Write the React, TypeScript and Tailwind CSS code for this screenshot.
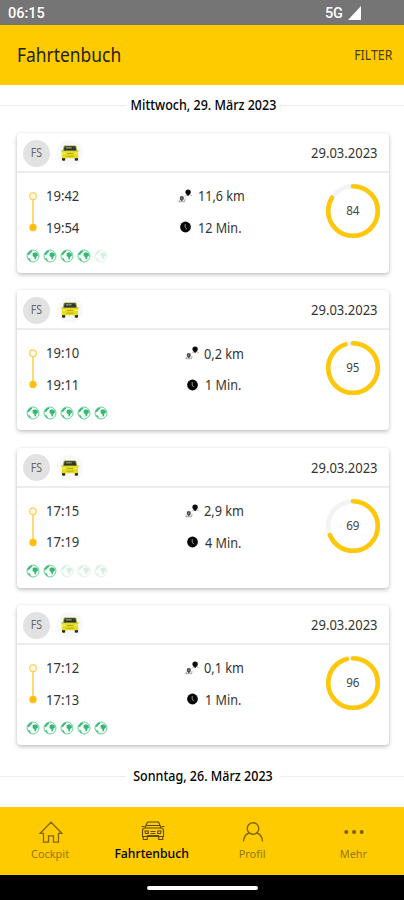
import React from 'react';

type Trip = {
  start: string;
  end: string;
  km: string;
  min: string;
  score: number;
  eco: number;
  wide?: boolean;
};

const trips: Trip[] = [
  { start: '19:42', end: '19:54', km: '11,6 km', min: '12 Min.', score: 84, eco: 4, wide: true },
  { start: '19:10', end: '19:11', km: '0,2 km', min: '1 Min.', score: 95, eco: 5 },
  { start: '17:15', end: '17:19', km: '2,9 km', min: '4 Min.', score: 69, eco: 2 },
  { start: '17:12', end: '17:13', km: '0,1 km', min: '1 Min.', score: 96, eco: 5 },
];

function TaxiIcon() {
  return (
    <svg width="18" height="16" viewBox="0 0 18 16">
      <path d="M.9 12h3.300v3.200c0 .6-3.100.6-3.100 0zM13.800 12h3.300l-.2 3.200c0 .6-3.100.6-3.100 0z" fill="#25251c" />
      <path d="M3.500.6h11q.7 0 .9.900l1.200 5.500H1.400l1.200-5.500q.2-.9.900-.9z" fill="#aaa83c" />
      <path d="M3.700 1.300h10.600l1 4.500H2.700z" fill="#2b3630" />
      <path d="M5 2h5.500l.5 1.500H4.700z" fill="#7c8580" />
      <path d="M1.800 5.700h14.400l.9 2v4.800q0 .7-.8.700H1.700q-.8 0-.8-.7V7.700z" fill="#e5dc20" />
      <path d="M.2 5.400h1.900v1.200H.2zM15.900 5.400h1.900v1.200h-1.900z" fill="#c8c123" />
      <path d="M6 8h6v.7H6zM5.500 10.700h7v.8h-7z" fill="#a59a12" />
      <path d="M1.600 7.800h2.700V9H1.600zM13.700 7.800h2.700V9h-2.700z" fill="#fff56b" />
    </svg>
  );
}

function Globe({ on }: { on: boolean }) {
  return (
    <svg width="14" height="14" viewBox="0 0 14 14" className={on ? '' : 'opacity-20'}>
      <circle cx="7" cy="7" r="6" fill="#f5fdf8" stroke="#5cc890" strokeWidth="0.900" />
      <path
        d="M1.200 5.400 3.400 2.500 5.800 1.500 6.300 2.500 4.500 3.900 3.500 5.600 2.300 6zM6.600 4.300 9 3.200 11.600 4.300 12 6.800 10.500 7.600 9.900 10.300 8.700 10.400 8.300 8 6.700 7.200zM1.800 9 3.500 9.300 5.200 12.300 3.600 11.600z"
        fill="#35b873"
      />
    </svg>
  );
}

function RouteIcon() {
  return (
    <svg width="15" height="14" viewBox="0 0 15 14">
      <path d="M7.400 3.300a2.700 2.700 0 1 1 5.400 0C12.800 5 10.100 7.200 10.100 7.200S7.400 5 7.400 3.300z" fill="#0c0c0c" />
      <path d="M1.700 9.200a2.100 2.100 0 1 1 4.200 0c0 1.300-2.100 3.100-2.100 3.100S1.700 10.500 1.700 9.200z" fill="#444" />
      <circle cx="3.800" cy="9.200" r="0.600" fill="#ccc" />
      <path d="M1.500 10.800.8 12.700h5.700l.6-2.700M7 7.500 8.500 6M12.200 6l1.600.8" fill="none" stroke="#8a8a8a" strokeWidth="0.800" />
    </svg>
  );
}

function ClockIcon() {
  return (
    <svg width="11" height="12" viewBox="0 0 11 12">
      <circle cx="5.500" cy="6" r="5.400" fill="#080808" />
      <path d="M5.200 3.200v3l1.600 1.900" fill="none" stroke="#aaa" strokeWidth="0.900" />
    </svg>
  );
}

function ScoreRing({ score }: { score: number }) {
  return (
    <div className="grid h-[56px] w-[56px] place-items-center">
      <svg width="56" height="56" viewBox="0 0 56 56" className="col-start-1 row-start-1">
        <circle cx="28" cy="28" r="24.800" fill="none" stroke="#f3f3f3" strokeWidth="4.600" />
        <circle
          cx="28"
          cy="28"
          r="24.800"
          fill="none"
          stroke="#fec708"
          strokeWidth="4.600"
          strokeLinecap="round"
          pathLength={100}
          strokeDasharray={`${score} 100`}
          transform="rotate(-90 28 28)"
        />
      </svg>
      <span className="col-start-1 row-start-1 scale-x-[0.97] text-[12px] leading-none text-[#444]">{score}</span>
    </div>
  );
}

function TripCard({ trip }: { trip: Trip }) {
  return (
    <article className="h-[140px] rounded-[4px] bg-white shadow-[0_2px_4px_rgba(0,0,0,0.22),0_0_3px_rgba(0,0,0,0.07)]">
      <header className="flex h-[40px] items-center border-b-2 border-[#ededed] pt-[2px] pr-[11px] pl-[6px]">
        <span className="flex h-[27px] w-[27px] items-center justify-center rounded-full bg-[#e2e2e2] text-[12px] text-[#666]">
          <span className="scale-x-[0.88]">FS</span>
        </span>
        <span className="ml-[7px] flex h-[26px] w-[26px] items-center justify-center rounded-full bg-[#f8f8f8]">
          <TaxiIcon />
        </span>
        <span className="ml-auto origin-right scale-x-[0.93] text-[14px] leading-none text-[#333]">29.03.2023</span>
      </header>
      <div className="flex h-[100px]">
        <div className="w-[160px] pl-[9px]">
          <div className="flex pt-[7px]">
            <svg width="14" height="56" viewBox="0 0 14 56">
              <path d="M7 19.500V45" stroke="#fed45c" strokeWidth="1.700" />
              <circle cx="7" cy="16.200" r="3.300" fill="#fffaf0" stroke="#fed04c" strokeWidth="1.200" />
              <circle cx="7" cy="47.500" r="3.700" fill="#febf0e" />
            </svg>
            <div className="ml-[6px] flex origin-left scale-x-[0.93] flex-col text-[14px] leading-[31.500px] text-[#333]">
              <span>{trip.start}</span>
              <span>{trip.end}</span>
            </div>
          </div>
          <div className="mt-[6px] flex gap-[3px]">
            {[0, 1, 2, 3, 4].map((i) => (
              <Globe key={i} on={i < trip.eco} />
            ))}
          </div>
        </div>
        <div className={trip.wide ? 'pt-[7px] pl-[1px]' : 'pt-[7px] pl-[8px]'}>
          <div className="flex h-[31.500px] items-center">
            <RouteIcon />
            <span className={trip.wide ? 'ml-[5px] origin-left scale-x-[0.9] text-[14px] text-[#333]' : 'ml-[4px] origin-left scale-x-[0.91] text-[14px] text-[#333]'}>
              {trip.km}
            </span>
          </div>
          <div className="flex h-[31.500px] items-center">
            <span className="ml-[2px] w-[18px]">
              <ClockIcon />
            </span>
            <span className="origin-left scale-x-[0.9] text-[14px] text-[#333]">{trip.min}</span>
          </div>
        </div>
        <div className="mt-[10px] mr-[8px] ml-auto">
          <ScoreRing score={trip.score} />
        </div>
      </div>
    </article>
  );
}

function DateRule({ children }: { children: React.ReactNode }) {
  return (
    <div className="flex h-[20px] items-center">
      <span className="h-px w-[126px] bg-[#ededed]" />
      <span className="flex w-[154px] justify-center text-[14px] leading-none font-medium whitespace-nowrap text-black">
        <span className="scale-x-[0.895]">{children}</span>
      </span>
      <span className="h-px flex-1 bg-[#ededed]" />
    </div>
  );
}

function NavItem({ icon, label, active }: { icon: React.ReactNode; label: string; active?: boolean }) {
  return (
    <div className={active ? 'flex flex-1 flex-col items-center text-black' : 'flex flex-1 flex-col items-center text-[#947813]'}>
      <div className="mt-[12px] flex h-[24px] items-center">{icon}</div>
      <span className={active ? 'mt-[2px] scale-x-[0.94] text-[13px] leading-[16px] font-medium' : 'mt-[2px] scale-x-[0.95] text-[11.500px] leading-[18px]'}>
        {label}
      </span>
    </div>
  );
}

export default function App() {
  return (
    <main className="flex h-[900px] w-[404px] flex-col overflow-hidden bg-white font-['Noto_Sans',sans-serif]">
      <div className="flex h-[25px] shrink-0 items-center bg-[#757575] pr-[43px] pl-[8px] font-['Roboto',sans-serif] font-medium text-white">
        <span className="mt-[3px] text-[14.500px] leading-none">06:15</span>
        <span className="mt-[3px] ml-auto text-[14.500px] leading-none">5G</span>
        <svg width="13" height="14" viewBox="0 0 13 14" className="mt-[1px] ml-[5px]">
          <path d="M13 0v14H0z" fill="white" />
        </svg>
      </div>
      <header className="flex h-[60px] shrink-0 items-center justify-between bg-[#fecb00] pr-[12px] pl-[17px]">
        <h1 className="origin-left scale-x-[0.87] text-[20px] leading-none text-[#241f0a]">Fahrtenbuch</h1>
        <button className="origin-right scale-x-[0.88] text-[14px] leading-none text-[#4c3e08]">FILTER</button>
      </header>
      <div className="flex flex-1 flex-col pt-[10px]">
        <DateRule>Mittwoch, 29. März 2023</DateRule>
        <section className="mt-[18px] flex flex-col gap-[17.400px] pr-[15px] pl-[17px]">
          {trips.map((trip) => (
            <TripCard key={trip.start} trip={trip} />
          ))}
        </section>
        <div className="mt-[21px]">
          <DateRule>Sonntag, 26. März 2023</DateRule>
        </div>
      </div>
      <nav className="flex h-[68px] shrink-0 bg-[#fecb00]">
        <NavItem
          label="Cockpit"
          icon={
            <svg width="24" height="24" viewBox="0 0 24 24" fill="none" stroke="#806709" strokeWidth="1.300" className="mt-[1px] ml-[1px]">
              <path d="M1.200 13.300 12 2.200l10.800 11.100h-3.300v8.900h-5v-6.400h-5v6.400h-5v-8.900z" />
            </svg>
          }
        />
        <NavItem
          active
          label="Fahrtenbuch"
          icon={
            <svg width="24" height="20" viewBox="0 0 24 20" fill="none" stroke="#5d4b05" strokeWidth="1.100" className="-mt-[1px] ml-[2px]">
              <path d="M4 7 6 2q.4-1 1.300-1h9.400q.9 0 1.300 1l2 5M5.500 4.500h13M4 7h16q2.500 0 2.500 3v5.500h-21V10Q1.500 7 4 7zM.5 5.500h3M20.500 5.500h3M2.300 15.500v3h4v-3M17.700 15.500v3h4v-3" />
              <path d="M4 10h3.300v2.500H4.500zM16.700 10H20l-.5 2.500h-2.800zM9.500 10.500h5M9.500 12.500h5M6.500 15.500v-1h11v1" />
            </svg>
          }
        />
        <NavItem
          label="Profil"
          icon={
            <svg width="24" height="24" viewBox="0 0 24 24" fill="none" stroke="#806709" strokeWidth="1.400" className="mt-[2px] ml-[1px]">
              <circle cx="12" cy="8.500" r="5.800" />
              <path d="M2.500 21.500c.4-4.600 2.300-7.600 5.800-8.500M15.700 13c3.500.9 5.400 3.900 5.800 8.500" />
            </svg>
          }
        />
        <NavItem
          label="Mehr"
          icon={
            <svg width="20" height="6" viewBox="0 0 20 6" fill="#755f0c" className="mt-[2px] ml-[1px]">
              <circle cx="2.300" cy="3" r="2" />
              <circle cx="10" cy="3" r="2" />
              <circle cx="17.700" cy="3" r="2" />
            </svg>
          }
        />
      </nav>
      <div className="flex h-[25px] shrink-0 items-center justify-center bg-black">
        <div className="h-[4px] w-[111px] rounded-full bg-white" />
      </div>
    </main>
  );
}
